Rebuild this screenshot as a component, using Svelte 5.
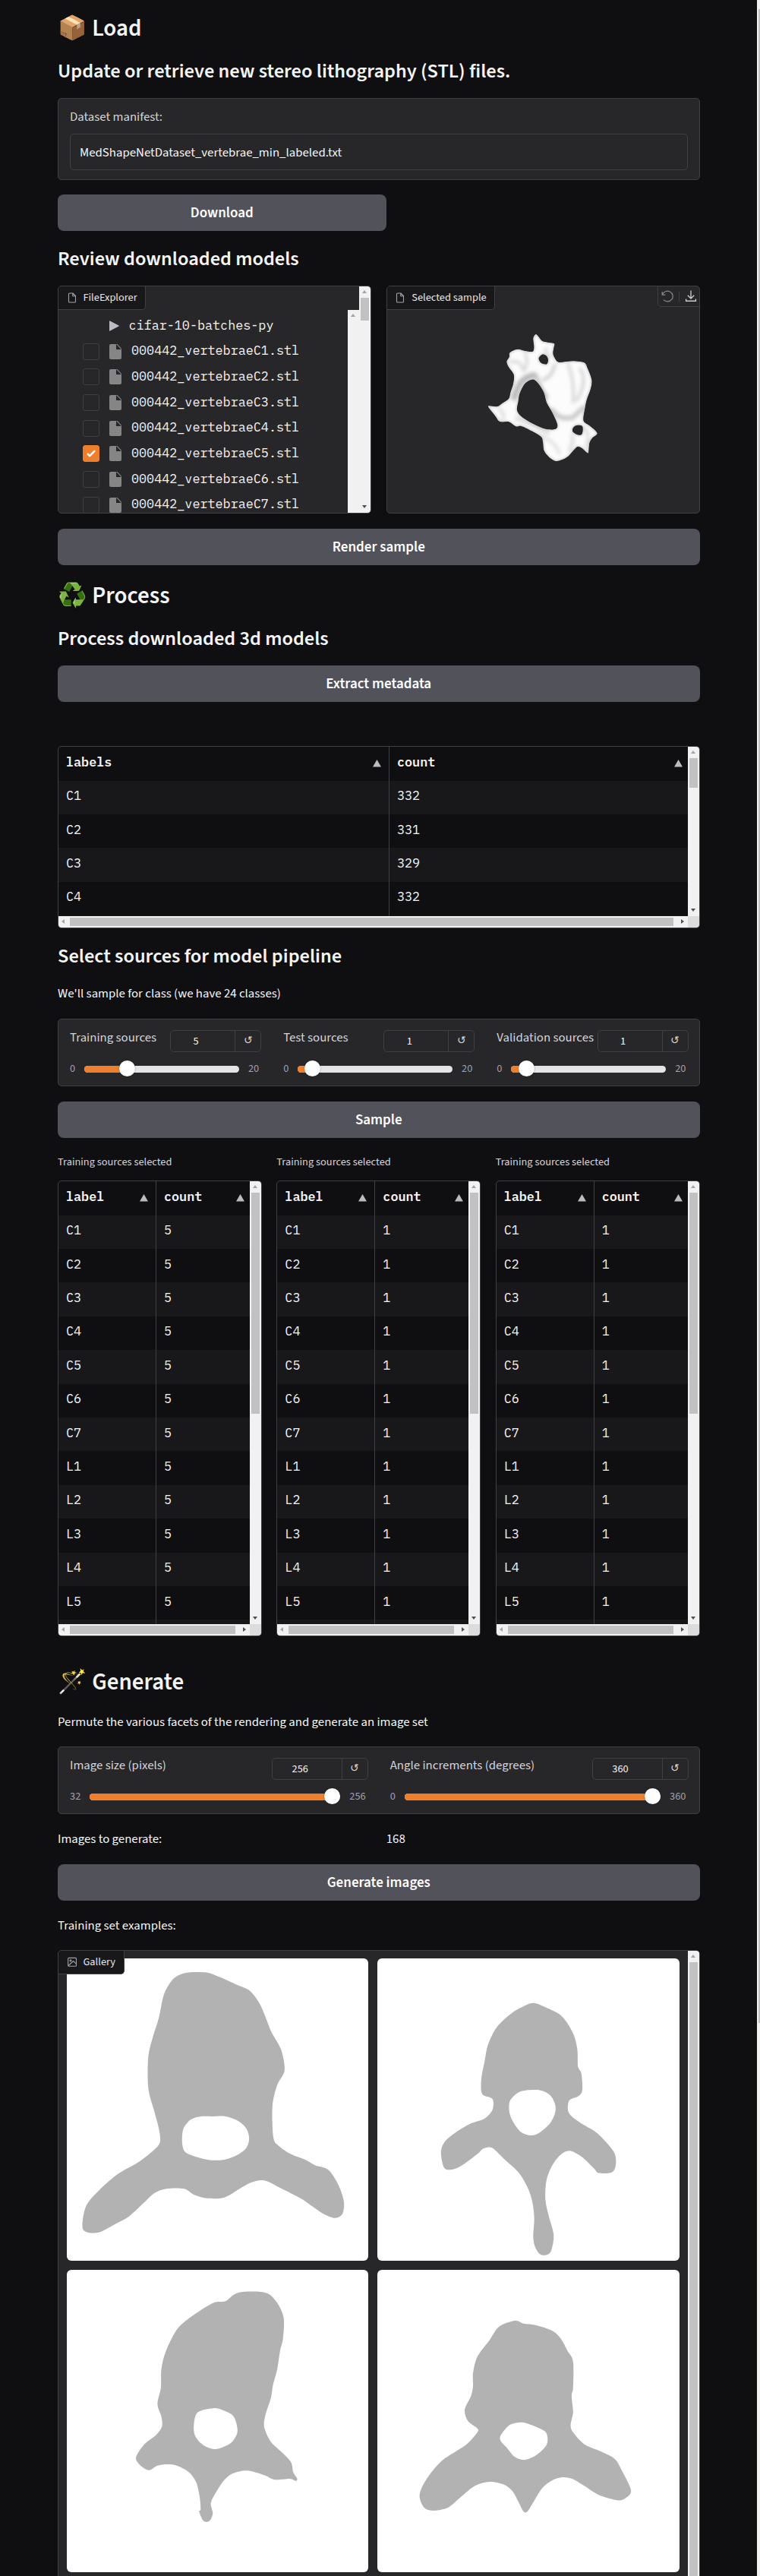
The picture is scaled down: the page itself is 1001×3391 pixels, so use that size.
<script>
  const files = [1, 2, 3, 4, 5, 6, 7].map((n) => ({ name: `000442_vertebraeC${n}.stl`, checked: n === 5 }));
  const metadata = [['C1', '332'], ['C2', '331'], ['C3', '329'], ['C4', '332'], ['', '']];
  const classes = ['C1', 'C2', 'C3', 'C4', 'C5', 'C6', 'C7', 'L1', 'L2', 'L3', 'L4', 'L5'];
  const sampleRows = (n) => [...classes.map((c) => [c, n]), ['', '']];
  const samples = [sampleRows('5'), sampleRows('1'), sampleRows('1')];
  const sources = [
    { label: 'Training sources', value: 5, min: 0, max: 20 },
    { label: 'Test sources', value: 1, min: 0, max: 20 },
    { label: 'Validation sources', value: 1, min: 0, max: 20 }
  ];
  const settings = [
    { label: 'Image size (pixels)', value: 256, min: 32, max: 256 },
    { label: 'Angle increments (degrees)', value: 360, min: 0, max: 360 }
  ];

  // Closed Catmull-Rom spline through a list of "x,y" points.
  function smooth(text) {
    const p = text.trim().split(/\s+/).map((s) => s.split(',').map(Number));
    const n = p.length;
    const k = 6.5;
    let d = `M${p[0]}`;
    for (let i = 0; i < n; i++) {
      const a = p[(i + n - 1) % n], b = p[i], c = p[(i + 1) % n], e = p[(i + 2) % n];
      d += `C${b[0] + (c[0] - a[0]) / k},${b[1] + (c[1] - a[1]) / k} ${c[0] - (e[0] - b[0]) / k},${c[1] - (e[1] - b[1]) / k} ${c}`;
    }
    return d + 'Z';
  }

  const gallery = [
    {
      box: '138 72 622 731',
      body: '390,106 426,106 455,118 487,135 515,150 535,180 548,215 560,250 580,293 587,343 572,378 562,430 564,505 575,525 600,545 632,560 650,572 677,583 697,617 709,657 708,685 700,697 687,699 665,688 640,668 620,652 580,628 545,609 518,614 493,630 463,650 428,652 400,643 380,629 343,629 318,640 295,665 265,697 235,716 205,734 180,734 170,720 178,670 205,632 245,592 285,565 315,538 330,517 328,485 318,440 306,385 306,310 316,260 328,215 338,160 355,125 370,112',
      hole: '396,460 415,454 440,454 465,454 490,464 508,483 514,508 507,532 485,550 460,559 430,559 400,550 382,540 376,520 377,490 384,473'
    },
    {
      box: '779 72 621 731',
      body: '1102,180 1125,190 1155,208 1172,232 1185,262 1191,295 1192,333 1199,350 1201,390 1193,405 1174,416 1173,445 1195,468 1230,493 1255,523 1268,545 1270,570 1262,589 1235,591 1225,580 1200,552 1175,537 1155,548 1138,575 1127,610 1125,655 1132,695 1142,740 1138,775 1130,788 1115,788 1104,770 1100,745 1102,700 1098,660 1088,625 1070,590 1040,557 1015,530 997,532 985,545 950,575 930,583 916,577 910,540 918,515 940,493 970,472 1000,459 1016,438 1016,412 995,400 993,365 1000,320 1007,280 1025,238 1055,205 1085,185',
      hole: '1085,391 1115,391 1135,403 1145,425 1145,445 1135,470 1112,494 1095,500 1075,492 1060,470 1051,445 1052,417 1068,397'
    },
    {
      box: '138 825 622 732',
      body: '492,880 547,880 570,902 585,940 584,990 578,1020 572,1065 563,1105 559,1135 548,1175 545,1205 558,1240 580,1265 600,1290 605,1315 613,1330 610,1336 598,1331 567,1333 545,1322 510,1311 480,1318 462,1335 445,1365 435,1390 439,1415 432,1433 420,1433 411,1411 414,1405 412,1375 405,1340 390,1315 365,1299 345,1296 325,1299 308,1310 292,1301 281,1285 284,1270 300,1245 322,1225 334,1205 333,1180 325,1150 332,1110 333,1065 343,1020 368,965 405,930 442,904 465,901',
      hole: '440,1160 460,1165 482,1180 490,1215 480,1240 462,1253 442,1259 420,1250 403,1228 400,1200 408,1170'
    },
    {
      box: '779 825 621 732',
      body: '1062,948 1080,955 1105,959 1140,973 1157,992 1170,1020 1182,1047 1182,1110 1179,1130 1182,1170 1177,1200 1182,1218 1205,1247 1240,1265 1268,1283 1282,1310 1301,1357 1293,1375 1275,1383 1235,1370 1205,1348 1180,1331 1160,1327 1140,1334 1118,1354 1100,1388 1088,1410 1080,1410 1070,1388 1058,1362 1040,1345 1010,1338 980,1348 950,1376 925,1400 895,1408 875,1400 866,1370 880,1332 912,1287 960,1250 985,1218 984,1208 965,1190 959,1163 972,1130 976,1105 976,1075 985,1035 1010,995 1030,962',
      hole: '1076,1194 1095,1200 1110,1207 1127,1220 1128,1247 1108,1272 1083,1285 1062,1278 1045,1255 1032,1237 1035,1222 1052,1200'
    }
  ].map((g) => ({ box: g.box, d: smooth(g.body) + smooth(g.hole) }));

  const bone =
    smooth('197,30 207,38 222,56 245,62 270,67 268,85 266,110 284,139 310,139 345,136 388,142 402,165 418,210 414,245 398,290 388,340 385,365 390,378 415,395 440,421 420,440 409,460 405,497 397,496 380,480 362,474 345,490 325,512 300,526 275,531 250,516 230,490 225,455 218,435 180,412 140,393 118,394 90,376 55,375 35,350 10,318 15,313 45,315 65,302 90,285 97,260 108,225 110,190 90,160 82,138 92,120 95,102 125,89 160,97 185,98 190,80 187,45') +
    smooth('190,209 210,228 230,262 240,300 262,338 282,385 275,404 240,405 210,395 175,378 140,355 123,330 128,295 133,265 150,230 170,213') +
    smooth('222,110 238,114 246,130 242,146 230,148 215,140 209,124') +
    smooth('362,389 380,392 383,408 378,426 362,427 346,418 342,406 350,394');
</script>

{#snippet fileIcon()}
  <svg class="tab-icon" viewBox="0 0 14 16" fill="none" stroke="#a1a1aa" stroke-width="1.1"><path d="M3.5 2h4.6L11.5 5.5V13a1 1 0 0 1-1 1h-7a1 1 0 0 1-1-1V3a1 1 0 0 1 1-1ZM7.8 2v3.8h3.7" /></svg>
{/snippet}

{#snippet vbar(kind)}
  <div class="vbar {kind}">
    <span class="arrow up"></span>
    <span class="thumb"></span>
    <span class="arrow down"></span>
  </div>
{/snippet}

{#snippet dataTable(heads, rows, kind)}
  <div class="data {kind}">
    <div class="rows">
      <div class="tr head">
        {#each heads as h}<div class="td">{h}<svg class="sort" viewBox="0 0 11 10"><path d="M5.5 0 11 9.6H0Z" /></svg></div>{/each}
      </div>
      {#each rows as row}
        <div class="tr">{#each row as cell}<div class="td">{cell}</div>{/each}</div>
      {/each}
    </div>
    {@render vbar('')}
    <div class="hbar"><span class="arrow left"></span><span class="hthumb"></span><span class="arrow right"></span></div>
    <div class="corner"></div>
  </div>
{/snippet}

{#snippet slider(s)}
  {@const f = (s.value - s.min) / (s.max - s.min)}
  <div class="slider">
    <div class="slider-head">
      <span class="slider-label">{s.label}</span>
      <div class="number"><span class="value">{s.value}</span><span class="reset">↺</span></div>
    </div>
    <div class="range">
      <span>{s.min}</span>
      <div class="track" style="--f: {f}"><div class="fill"></div><div class="knob"></div></div>
      <span>{s.max}</span>
    </div>
  </div>
{/snippet}

<div class="page">
  <main>
    <h1>📦 Load</h1>
    <h2>Update or retrieve new stereo lithography (STL) files.</h2>
    <section class="card manifest">
      <div class="field-label">Dataset manifest:</div>
      <div class="input">MedShapeNetDataset_vertebrae_min_labeled.txt</div>
    </section>
    <button class="half">Download</button>

    <h2>Review downloaded models</h2>
    <div class="pair">
      <section class="card explorer">
        <div class="explorer-body">
          <div class="tab">{@render fileIcon()}FileExplorer</div>
          <div class="tree-wrap">
            <div class="tree">
              <div class="node folder"><svg class="caret" viewBox="0 0 13 14"><path d="M1 .5 12.4 6.4a.7.7 0 0 1 0 1.2L1 13.6a.7.7 0 0 1-1-.6V1A.7.7 0 0 1 1 .5Z" /></svg><span>cifar-10-batches-py</span></div>
              {#each files as file}
                <div class="node">
                  <div class="check" class:on={file.checked}>
                    {#if file.checked}<svg viewBox="0 0 16 16"><path d="M12.2 4.8a1 1 0 0 1 0 1.4l-5 5a1 1 0 0 1-1.4 0l-2-2a1 1 0 0 1 1.4-1.4L6.5 9.1l4.3-4.3a1 1 0 0 1 1.4 0Z" fill="#fff" /></svg>{/if}
                  </div>
                  <svg class="doc" viewBox="0 0 16 20"><path d="M2 0H9V7H16V18a2 2 0 0 1-2 2H2a2 2 0 0 1-2-2V2A2 2 0 0 1 2 0Z" /><path d="M9 0h1.6L16 5.8V7.2Z" /></svg>
                  <span>{file.name}</span>
                </div>
              {/each}
            </div>
            {@render vbar('inner')}
          </div>
        </div>
        {@render vbar('outer')}
      </section>
      <section class="card viewer">
        <div class="tab">{@render fileIcon()}Selected sample</div>
        <div class="tools">
          <svg viewBox="0 0 16 16" fill="none" stroke="#85858a" stroke-width="1.3"><path d="M1.2 2v4.2h4.2M1.5 6A7 6.8 0 1 1 3 12.6" /></svg>
          <i></i>
          <svg viewBox="0 0 16 16" fill="none" stroke="#c9c9cd" stroke-width="1.4"><path d="M8 .5v10.4M3.8 6.8 8 11l4.2-4.2M1.6 11.5v2.8h12.8v-2.8" /></svg>
        </div>
        <svg class="bone" viewBox="0 0 480 570">
          <defs>
            <clipPath id="bone-clip"><path d={bone} clip-rule="evenodd" /></clipPath>
            <filter id="soft"><feGaussianBlur stdDeviation="8" /></filter>
            <filter id="rim"><feGaussianBlur stdDeviation="4" /></filter>
          </defs>
          <g clip-path="url(#bone-clip)">
            <path d={bone} fill="#fcfcfc" fill-rule="evenodd" />
            <g filter="url(#soft)" fill="none" stroke-linecap="round">
              <path d="M112 280C125 235 140 200 190 192" stroke="#b8b8b8" stroke-width="24" />
              <path d="M240 280Q205 225 200 195" stroke="#c4c4c4" stroke-width="14" />
              <path d="M262 330Q290 372 345 358L385 320" stroke="#c8c8c8" stroke-width="18" />
              <path d="M120 360Q180 385 245 420" stroke="#d8d8d8" stroke-width="14" />
              <path d="M215 430Q270 450 290 500" stroke="#dadada" stroke-width="10" />
              <path d="M325 150Q350 210 345 300" stroke="#d4d4d4" stroke-width="11" />
              <path d="M372 165Q405 210 360 290" stroke="#d2d2d2" stroke-width="11" />
              <path d="M272 150Q262 200 225 210" stroke="#c8c8c8" stroke-width="11" />
              <path d="M95 140Q135 130 145 165" stroke="#d2d2d2" stroke-width="10" />
              <path d="M155 105Q172 140 150 175" stroke="#d2d2d2" stroke-width="10" />
              <path d="M50 325Q80 340 65 370" stroke="#d4d4d4" stroke-width="9" />
              <path d="M240 85Q228 100 255 120" stroke="#d4d4d4" stroke-width="10" />
              <path d="M390 400Q415 430 395 480" stroke="#d4d4d4" stroke-width="10" />
              <path d="M330 490Q350 450 340 430" stroke="#d8d8d8" stroke-width="12" />
            </g>
            <path d={bone} fill="none" stroke="#b8b8b8" stroke-width="6" filter="url(#rim)" />
          </g>
        </svg>
      </section>
    </div>
    <button>Render sample</button>

    <h1>♻️ Process</h1>
    <h2>Process downloaded 3d models</h2>
    <button class="extract">Extract metadata</button>
    {@render dataTable(['labels', 'count'], metadata, 'wide')}

    <h2>Select sources for model pipeline</h2>
    <p>We'll sample for class (we have 24 classes)</p>
    <section class="card sliders three">
      {#each sources as s}{@render slider(s)}{/each}
    </section>
    <button class="sample">Sample</button>
    <div class="tables">
      {#each samples as rows}
        <div>
          <div class="caption">Training sources selected</div>
          {@render dataTable(['label', 'count'], rows, 'tall')}
        </div>
      {/each}
    </div>

    <h1 class="generate">🪄 Generate</h1>
    <p>Permute the various facets of the rendering and generate an image set</p>
    <section class="card sliders two">
      {#each settings as s}{@render slider(s)}{/each}
    </section>
    <div class="pair count"><p>Images to generate:</p><p>168</p></div>
    <button>Generate images</button>
    <p class="examples">Training set examples:</p>
    <section class="card gallery">
      <div class="tab">
        <svg class="tab-icon" viewBox="0 0 14 16" fill="none" stroke="#a1a1aa" stroke-width="1.1"><rect x="1.7" y="2.4" width="10.8" height="10.8" rx="1" /><circle cx="5" cy="5.7" r="1" /><path d="M2 12.5 8.6 6.6l3.8 3.6" /></svg>Gallery
      </div>
      <div class="grid">
        {#each gallery as g}
          <svg viewBox={g.box} preserveAspectRatio="none"><path d={g.d} fill-rule="evenodd" /></svg>
        {/each}
      </div>
      {@render vbar('long')}
    </section>
  </main>
  <div class="page-bar"><span></span></div>
</div>

<style>
  :global(body) { background: #0f0f11; }
  .page {
    display: flex; justify-content: space-between; height: 3391px; overflow: hidden;
    background: #0f0f11; color: #f4f4f5;
    font: 400 16.8px/24px 'Source Sans 3', 'Noto Sans CJK SC', sans-serif;
  }
  .page * { box-sizing: border-box; }
  main { width: 845.5px; margin-left: 76px; padding-top: 17px; }
  .page-bar { width: 4px; padding: 12px 0 0 2px; background: #f1f1f1; }
  .page-bar span { display: block; width: 2px; height: 2651px; background: #c1c1c1; }

  h1, h2, p { margin: 0; }
  h1 { font-size: 31px; line-height: 40px; font-weight: 600; }
  h2 { font-size: 26.4px; line-height: 36px; font-weight: 600; margin: 18.5px 0 17.5px; }
  button {
    display: block; width: 100%; height: 48px; margin: 20px 0 0; padding: 0; border: 0; border-radius: 8px;
    background: #52525b; color: #fff; font: 600 19px/49px 'Source Sans 3', 'Noto Sans CJK SC', sans-serif; text-align: center;
  }
  button.half { width: 432.5px; margin-top: 19px; }
  button.extract { margin-top: 17px; }
  button.sample { margin-top: 19.5px; }
  button + h1 { margin-top: 20px; }
  .card { border: 1px solid #3f3f46; border-radius: 5px; background: #27272a; overflow: hidden; }

  .manifest { height: 108px; padding: 12px 15px 0; }
  .field-label { color: #d4d4d8; }
  .input { height: 48px; margin-top: 10px; padding: 0 12px; border: 1px solid #3f3f46; border-radius: 5px; line-height: 48px; }

  .pair { display: grid; grid-template-columns: 1fr 1fr; gap: 20px; }
  .explorer { display: flex; height: 300px; }
  .explorer-body { flex: 1; display: flex; flex-direction: column; align-items: flex-start; }
  .tab {
    display: flex; align-items: center; flex: none; width: max-content; height: 31px; padding: 0 10.5px; border: 1px solid #3f3f46;
    border-width: 0 1px 1px 0; border-radius: 0 0 5px 0; background: #18181b; color: #e4e4e7; font-size: 14.35px; line-height: 20px;
  }
  .tab-icon { width: 14px; height: 16px; margin-right: 8px; }
  .tree-wrap { display: flex; flex: 1; width: 100%; min-height: 0; }
  .tree { flex: 1; padding: 4px 0 0 31.5px; overflow: hidden; font: 16.75px/30px 'IBM Plex Mono', 'Liberation Mono', monospace; }
  .node { display: flex; align-items: center; height: 33.67px; white-space: pre; }
  .node span { padding-bottom: 3px; }
  .folder { height: 34px; padding-left: 35px; }
  .folder span { margin-left: 13px; padding-bottom: 2px; }
  .caret { width: 13px; height: 14px; fill: #bbbbc2; }
  .check { width: 22px; height: 22px; border: 1px solid #3f3f46; border-radius: 3px; }
  .check.on { border-color: #ee7f2c; background: #ee7f2c; }
  .check svg { display: block; width: 20px; height: 20px; }
  .doc { width: 16px; height: 20px; margin: 0 13.5px 0 13px; fill: #858585; }

  .vbar { position: relative; display: flex; flex-direction: column; flex: none; width: 15px; background: #f1f1f1; }
  .arrow { display: block; flex: none; width: 15px; height: 15px; }
  .arrow::before { content: ''; display: block; border: 3.5px solid transparent; width: 0; height: 0; }
  .arrow.up::before { margin: 2px 4px 0; border-bottom: 4px solid #a3a3a3; }
  .arrow.down { margin-top: auto; }
  .arrow.down::before { margin: 5px 4px 0; border-top: 4px solid #505050; }
  .arrow.left::before { margin: 4px 2px 0 1px; border-right: 4px solid #a3a3a3; }
  .arrow.right::before { margin: 4px 0 0 6px; border-left: 4px solid #505050; }
  .arrow::before { overflow: hidden; }
  .arrow.up { display: flow-root; }
  .arrow.down { display: flow-root; }
  .arrow.left, .arrow.right { display: flow-root; }
  .thumb { width: 11px; height: 39px; margin-left: 2px; background: #c1c1c1; }
  .outer .thumb { height: 30px; }
  .inner .thumb, .inner .down { display: none; }
  .tall .thumb { height: 291px; }
  .long .thumb { height: 850px; flex: none; }

  .viewer { position: relative; height: 300px; }
  .tools {
    position: absolute; top: -1px; right: -1px; display: flex; align-items: center; width: 56px; height: 28px; padding-left: 4px;
    border: 1px solid #3f3f46; border-radius: 0 5px 0 5px;
  }
  .tools svg { width: 16px; height: 16px; }
  .tools i { width: 1px; height: 13px; margin: 0 7px; background: #3f3f46; }
  .bone { display: block; width: 160px; height: 190px; margin: 22px 0 0 130px; }

  .extract + .data { margin-top: 58px; }
  .data {
    display: grid; grid-template-columns: minmax(0, 1fr) 15px; grid-template-rows: minmax(0, 1fr) 15px;
    border: 1px solid #3f3f46; border-radius: 5px; overflow: hidden; font: 16.75px/22px 'IBM Plex Mono', 'Liberation Mono', monospace;
  }
  .wide { height: 240px; }
  .tall { height: 600px; }
  .rows { overflow: hidden; }
  .tr { display: grid; grid-template-columns: 436px 1fr; height: 44.4px; }
  .tall .tr { grid-template-columns: 129px 1fr; }
  .tr.head { height: 44.6px; font-weight: 600; }
  .tr:nth-child(even) { background: #18181b; }
  .td { display: flex; justify-content: space-between; align-items: center; padding: 0 7px 5px 10px; }
  .td:first-child { padding-right: 10px; border-right: 1px solid #3f3f46; }
  .sort { width: 11px; height: 10px; margin-top: 5px; fill: #bbbbc2; }
  .hbar { display: flex; align-items: center; background: #f1f1f1; }
  .hthumb { flex: 1; height: 11px; margin-right: 4px; background: #c1c1c1; }
  .corner { background: #dcdcdc; }
  .data + h2 { margin: 19px 0; }

  .sliders { display: grid; gap: 29px; height: 89px; margin-top: 21px; padding: 14px 14px 0 15px; }
  .three { grid-template-columns: repeat(3, minmax(0, 1fr)); }
  .two { grid-template-columns: repeat(2, minmax(0, 1fr)); margin-top: 20.5px; }
  .slider-head { display: flex; justify-content: space-between; height: 29px; }
  .slider-label { margin-top: -2px; color: #d4d4d8; white-space: nowrap; }
  .number { display: flex; flex: none; width: 120px; border: 1px solid #3f3f46; border-radius: 5px; font-size: 14.35px; line-height: 28px; text-align: center; }
  .two .number { width: 127px; }
  .value { flex: 1; padding-right: 18px; }
  .reset { width: 34px; border-left: 1px solid #3f3f46; color: #d4d4d8; line-height: 25px; }
  .range { display: flex; align-items: center; gap: 12px; height: 20px; margin-top: 12px; padding-right: 3px; color: #a1a1aa; font-size: 14.35px; line-height: 20px; }
  .track { position: relative; flex: 1; height: 9px; border-radius: 5px; background: #e4e4e7; }
  .fill { width: calc(10px + var(--f) * (100% - 20px)); height: 9px; border-radius: 5px 0 0 5px; background: #ee7f2c; }
  .knob { position: absolute; top: -7px; left: calc(var(--f) * (100% - 21px)); width: 21px; height: 21px; border-radius: 50%; background: #fff; box-shadow: 0 0 2px #0006; }

  .tables { display: grid; grid-template-columns: repeat(3, minmax(0, 1fr)); gap: 19.5px; margin-top: 22.5px; }
  .caption { margin-bottom: 14px; color: #d4d4d8; font-size: 14.35px; line-height: 20px; }

  .generate { margin: 40px 0 20.5px; }
  .count { margin-top: 21px; }
  .count + button { margin-top: 20.5px; }
  .examples { margin-top: 21px; }
  .gallery { position: relative; display: flex; height: 900px; margin-top: 20px; }
  .gallery .tab { position: absolute; top: 0; left: 0; }
  .grid { flex: 1; display: grid; grid-template-columns: repeat(2, minmax(0, 1fr)); grid-auto-rows: 398px; align-content: start; gap: 11.5px 12px; padding: 10.5px 11px; }
  .grid svg { width: 100%; height: 100%; border-radius: 6px; background: #fff; fill: #b2b2b2; }
</style>
